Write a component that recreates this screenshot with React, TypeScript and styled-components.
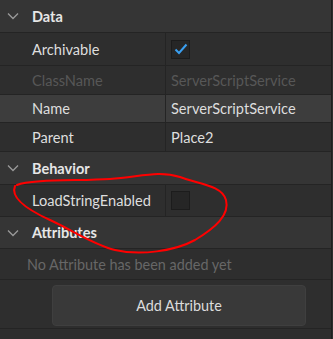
import React from "react";
import styled, { createGlobalStyle } from "styled-components";

const Global = createGlobalStyle`
  html, body { margin: 0; padding: 0; background: #2e2e2e; }
  body { font-family: Lato, "Open Sans", sans-serif; }
`;

const Panel = styled.div`
  position: relative;
  width: 331px;
  height: 339px;
  background: #2e2e2e;
  border-right: 1px solid #1f1f1f;
  overflow: hidden;
`;

const Header = styled.div<{ h: number }>`
  display: flex;
  align-items: center;
  height: ${(p) => p.h}px;
  background: #353535;
  border-bottom: 1px solid #242424;
  color: #e6e6e6;
  font-size: 14.5px;
  font-weight: 700;
`;

const Chevron = styled.span`
  display: flex;
  align-items: center;
  justify-content: center;
  width: 26px;
  margin-right: 6px;
`;

const Row = styled.div<{ h: number; selected?: boolean }>`
  display: grid;
  grid-template-columns: 166px 1fr;
  height: ${(p) => p.h}px;
  background: ${(p) => (p.selected ? "#3d3d3d" : "#2e2e2e")};
  border-bottom: 1px solid #242424;
  font-size: 14.6px;
`;

const NameCell = styled.div<{ disabled?: boolean }>`
  display: flex;
  align-items: center;
  padding-left: 32px;
  border-right: 1px solid #242424;
  color: ${(p) => (p.disabled ? "#575757" : "#dedede")};
`;

const ValueCell = styled.div<{ disabled?: boolean }>`
  display: flex;
  align-items: center;
  padding-left: 5px;
  color: ${(p) => (p.disabled ? "#575757" : "#dedede")};
`;

const Box = styled.div`
  width: 17px;
  height: 17px;
  background: #262626;
  border: 1px solid #1c1c1c;
  display: flex;
  align-items: center;
  justify-content: center;
`;

const InfoRow = styled.div`
  display: flex;
  align-items: center;
  height: 30px;
  padding-left: 27px;
  border-bottom: 1px solid #242424;
  color: #676767;
  font-size: 14.4px;
`;

const ButtonArea = styled.div`
  display: flex;
  justify-content: center;
  height: 49px;
  box-sizing: border-box;
  padding: 5px 25px 0 52px;
  border-bottom: 1px solid #242424;
`;

const AddButton = styled.button`
  width: 254px;
  height: 41px;
  background: #393939;
  border: 1px solid #3f3f3f;
  border-radius: 4px;
  color: #dcdcdc;
  font-family: Lato, "Open Sans", sans-serif;
  font-size: 14.4px;
  padding: 0;
`;

const Annotation = styled.svg`
  position: absolute;
  left: 0;
  top: 0;
  pointer-events: none;
`;

const ChevronIcon = () => (
  <Chevron>
    <svg width="12" height="8" viewBox="0 0 12 8">
      <path d="M1 1.5 L6 6.5 L11 1.5" fill="none" stroke="#9a9a9a" strokeWidth="1.3" />
    </svg>
  </Chevron>
);

const Check = ({ checked }: { checked: boolean }) => (
  <Box>
    {checked && (
      <svg width="14" height="12" viewBox="0 0 14 12">
        <path d="M1.5 6.5 L5 10 L12.5 1.5" fill="none" stroke="#3a9ff0" strokeWidth="2" />
      </svg>
    )}
  </Box>
);

export default function App() {
  return (
    <>
      <Global />
      <Panel>
        <Header h={32}>
          <ChevronIcon />
          Data
        </Header>
        <Row h={32}>
          <NameCell>Archivable</NameCell>
          <ValueCell>
            <Check checked />
          </ValueCell>
        </Row>
        <Row h={28}>
          <NameCell disabled>ClassName</NameCell>
          <ValueCell disabled>ServerScriptService</ValueCell>
        </Row>
        <Row h={27} selected>
          <NameCell>Name</NameCell>
          <ValueCell>ServerScriptService</ValueCell>
        </Row>
        <Row h={28}>
          <NameCell>Parent</NameCell>
          <ValueCell>Place2</ValueCell>
        </Row>
        <Header h={32}>
          <ChevronIcon />
          Behavior
        </Header>
        <Row h={31}>
          <NameCell>LoadStringEnabled</NameCell>
          <ValueCell>
            <Check checked={false} />
          </ValueCell>
        </Row>
        <Header h={31}>
          <ChevronIcon />
          Attributes
        </Header>
        <InfoRow>No Attribute has been added yet</InfoRow>
        <ButtonArea>
          <AddButton>Add Attribute</AddButton>
        </ButtonArea>
        <Annotation width="333" height="339" viewBox="0 0 333 339">
          <path
            d="M17 185 C30 179 80 181 110 179 C140 177 158 170 180 177 C198 184 222 185 226 200 C230 215 215 228 195 240 C175 251 140 256 115 250 C92 244 72 230 50 220 C28 210 10 198 15 186"
            fill="none"
            stroke="#ff0000"
            strokeWidth="2"
            strokeLinecap="round"
          />
        </Annotation>
      </Panel>
    </>
  );
}
